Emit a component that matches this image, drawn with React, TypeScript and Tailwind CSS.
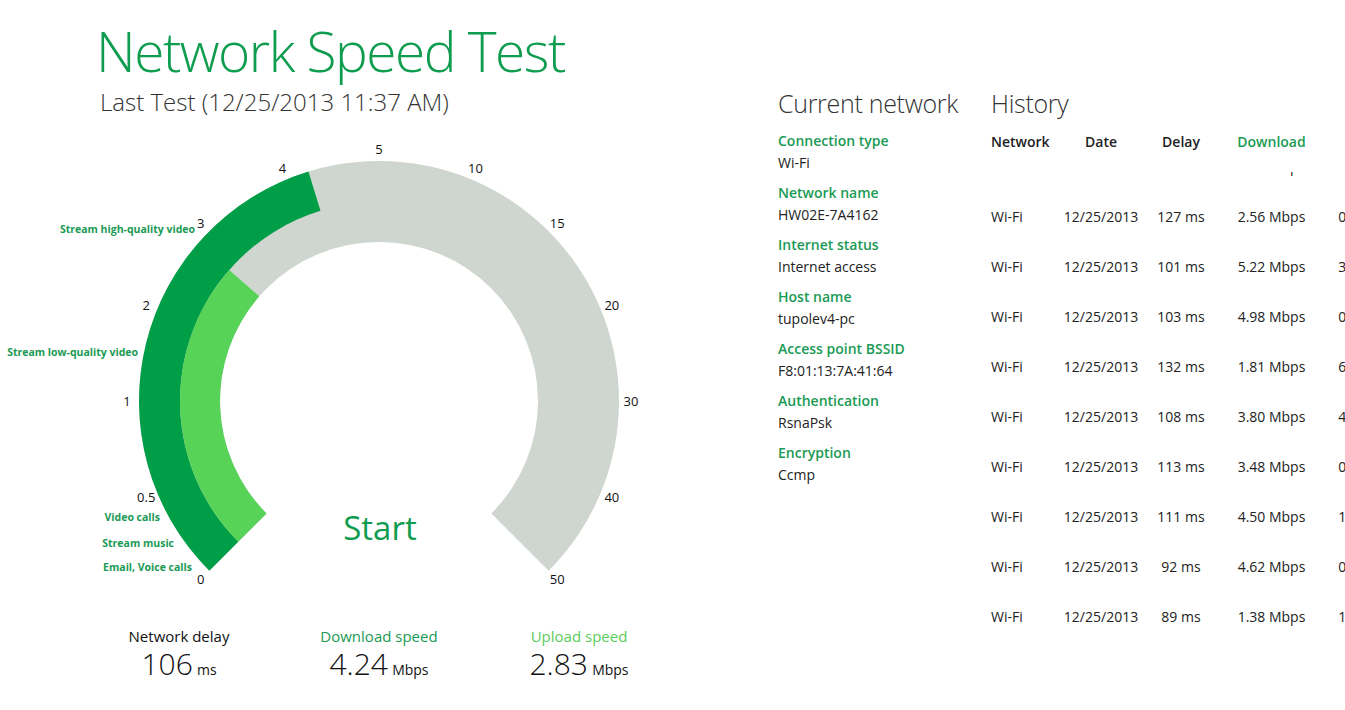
import React from 'react';

const GREEN = '#0e9c4f';
const CX = 379;
const CY = 401;

// gauge sweep is 270deg, starting at bottom-left and going clockwise
const pt = (s: number, r: number) => {
    const a = ((225 - s) * Math.PI) / 180;
    return [CX + r * Math.cos(a), CY - r * Math.sin(a)];
};

const sector = (s0: number, s1: number, rIn: number, rOut: number) => {
    const large = s1 - s0 > 180 ? 1 : 0;
    const [x0, y0] = pt(s0, rOut);
    const [x1, y1] = pt(s1, rOut);
    const [x2, y2] = pt(s1, rIn);
    const [x3, y3] = pt(s0, rIn);
    return `M${x0} ${y0} A${rOut} ${rOut} 0 ${large} 1 ${x1} ${y1} L${x2} ${y2} A${rIn} ${rIn} 0 ${large} 0 ${x3} ${y3} Z`;
};

const TICKS = ['0', '0.5', '1', '2', '3', '4', '5', '10', '15', '20', '30', '40', '50'];
const STEP = 22.5;

// map a Mbps value onto the non-linear scale
const toSweep = (v: number) => {
    const vals = TICKS.map(Number);
    for (let i = 0; i < vals.length - 1; i++) {
        if (v <= vals[i + 1]) return (i + (v - vals[i]) / (vals[i + 1] - vals[i])) * STEP;
    }
    return 270;
};

const USES = [
    { text: 'Stream high-quality video', x: 195, y: 229 },
    { text: 'Stream low-quality video', x: 138, y: 352 },
    { text: 'Video calls', x: 160, y: 517 },
    { text: 'Stream music', x: 174, y: 543 },
    { text: 'Email, Voice calls', x: 192, y: 567 },
];

const Gauge = ({ download, upload }: { download: number, upload: number }) => (
    <svg width={700} height={470} viewBox="0 130 700 470" className="block">
        <path d={sector(0, 270, 159, 240)} fill="#cfd5cf" />
        <path d={sector(0, toSweep(download), 199, 240)} fill="#009e47" />
        <path d={sector(0, toSweep(upload), 159, 199)} fill="#57d457" />
        {TICKS.map((t, i) => {
            const [x, y] = pt(i * STEP, 252);
            return (
                <text key={t} x={x} y={y} textAnchor="middle" dominantBaseline="central" fontSize={13} fill="#111">{t}</text>
            );
        })}
        {USES.map(u => (
            <text key={u.text} x={u.x} y={u.y} textAnchor="end" dominantBaseline="central" fontSize={10.5} fontWeight={700} fill="#1a9a55">{u.text}</text>
        ))}
        <text x={380} y={527} textAnchor="middle" dominantBaseline="central" fontSize={33} fill={GREEN} className="cursor-pointer">Start</text>
    </svg>
);

const Stat = ({ label, value, unit, color }: { label: string, value: string, unit: string, color: string }) => (
    <div className="flex flex-col items-center">
        <span className="text-[15px] leading-[20px]" style={{ color }}>{label}</span>
        <span className="text-[#111] leading-[36px]"><span className="text-[30px] font-light">{value}</span> <span className="text-[14px]">{unit}</span></span>
    </div>
);

const DETAILS = [
    ['Connection type', 'Wi-Fi'],
    ['Network name', 'HW02E-7A4162'],
    ['Internet status', 'Internet access'],
    ['Host name', 'tupolev4-pc'],
    ['Access point BSSID', 'F8:01:13:7A:41:64'],
    ['Authentication', 'RsnaPsk'],
    ['Encryption', 'Ccmp'],
];

const HISTORY = [
    ['12/25/2013', '115 ms', '3.12 Mbps', '0.96 Mbps'],
    ['12/25/2013', '127 ms', '2.56 Mbps', '0.88 Mbps'],
    ['12/25/2013', '101 ms', '5.22 Mbps', '3.05 Mbps'],
    ['12/25/2013', '103 ms', '4.98 Mbps', '0.74 Mbps'],
    ['12/25/2013', '132 ms', '1.81 Mbps', '6.10 Mbps'],
    ['12/25/2013', '108 ms', '3.80 Mbps', '4.21 Mbps'],
    ['12/25/2013', '113 ms', '3.48 Mbps', '0.92 Mbps'],
    ['12/25/2013', '111 ms', '4.50 Mbps', '1.67 Mbps'],
    ['12/25/2013', '92 ms', '4.62 Mbps', '0.81 Mbps'],
    ['12/25/2013', '89 ms', '1.38 Mbps', '1.12 Mbps'],
];

const COLS = 'grid grid-cols-[70px_80px_80px_101px_100px] w-[431px]';

export default function App() {
    return (
        <div className="w-[1345px] h-[710px] overflow-hidden bg-white flex text-[#222]" style={{ fontFamily: '"Open Sans", "Noto Sans", sans-serif' }}>
            <div className="w-[778px] shrink-0 flex flex-col">
                <div className="pl-[96px] h-[130px]">
                    <h1 className="text-[55px] font-light leading-[60px] pt-[21px] tracking-[-1.5px]" style={{ color: GREEN }}>Network Speed Test</h1>
                    <p className="text-[24px] font-light leading-[34px] text-[#333] pl-[4px] mt-[4px]">Last Test (12/25/2013 11:37 AM)</p>
                </div>
                <Gauge download={4.24} upload={2.83} />
                <div className="ml-[79px] w-[600px] grid grid-cols-3 mt-[26px]">
                    <Stat label="Network delay" value="106" unit="ms" color="#111" />
                    <Stat label="Download speed" value="4.24" unit="Mbps" color="#1a9a55" />
                    <Stat label="Upload speed" value="2.83" unit="Mbps" color="#5ccc5c" />
                </div>
            </div>

            <div className="flex pt-[86px] min-w-0">
                <div className="w-[213px] shrink-0">
                    <h2 className="text-[25px] font-light leading-[34px] text-[#333] tracking-[-0.3px]">Current network</h2>
                    <div className="mt-[10px] flex flex-col gap-[8px]">
                        {DETAILS.map(([k, v]) => (
                            <div key={k} className="flex flex-col">
                                <span className="text-[14px] font-semibold leading-[22px] text-[#1a9a55]">{k}</span>
                                <span className="text-[14px] leading-[22px] text-[#222]">{v}</span>
                            </div>
                        ))}
                    </div>
                </div>

                <div className="shrink-0">
                    <h2 className="text-[25px] font-light leading-[34px] text-[#333] tracking-[-0.3px]">History</h2>
                    <div className={`${COLS} mt-[10px] h-[22px] items-center text-[14px] font-semibold`}>
                        <span>Network</span>
                        <span className="text-center">Date</span>
                        <span className="text-center">Delay</span>
                        <span className="text-center text-[#1a9a55]">Download</span>
                        <span className="text-center">Upload</span>
                    </div>
                    <div className="h-[500px] overflow-hidden mt-[20px]">
                        <div className="-mt-[31px]">
                            {HISTORY.map((r, i) => (
                                <div key={i} className={`${COLS} h-[50px] items-center text-[14px] text-[#222]`}>
                                    <span>Wi-Fi</span>
                                    <span className="text-center">{r[0]}</span>
                                    <span className="text-center">{r[1]}</span>
                                    <span className="text-center">{r[2]}</span>
                                    <span className="text-center">{r[3]}</span>
                                </div>
                            ))}
                        </div>
                    </div>
                </div>
            </div>
        </div>
    );
}
